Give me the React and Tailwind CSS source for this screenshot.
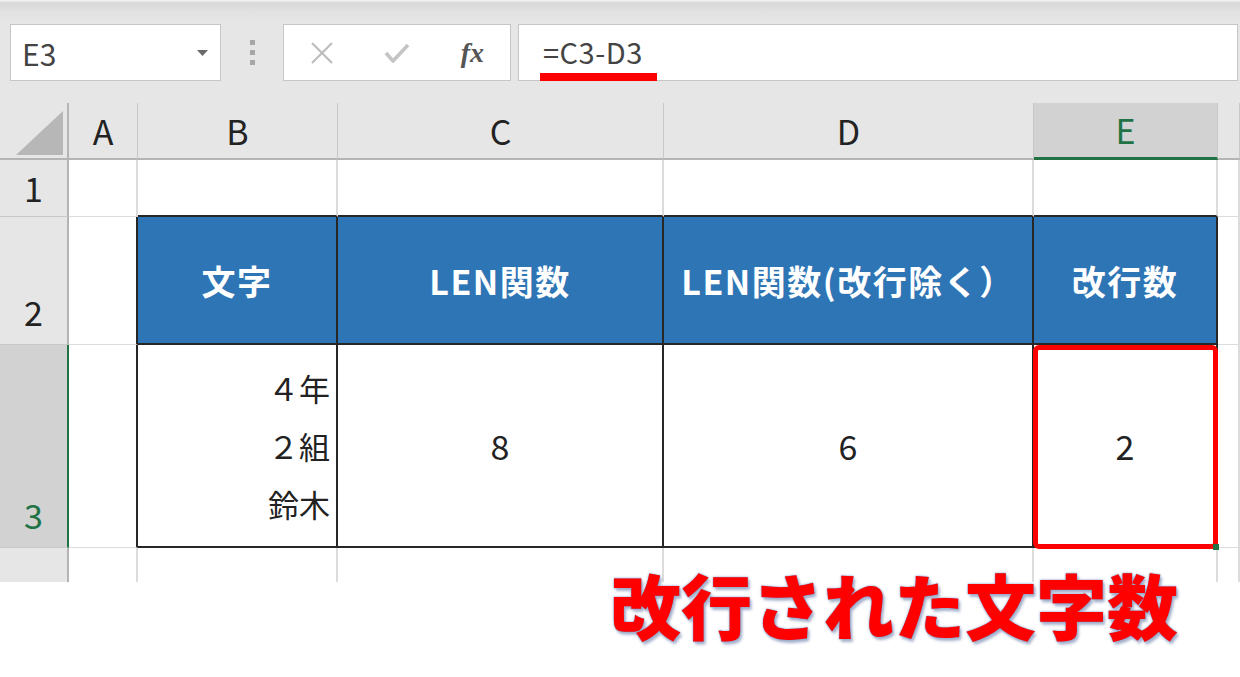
import React from "react";

const FONT = "font-['Noto_Sans_CJK_JP','Noto_Sans',sans-serif]";

function ColHead({ children, active }) {
  return (
    <div
      className={`flex items-center justify-center text-[34px] leading-none ${
        active
          ? "bg-[#d2d2d2] text-[#217346] border-b-[3px] border-b-[#217346]"
          : "bg-[#e6e6e6] text-[#222] border-b-2 border-b-[#b4b4b4]"
      } border-r border-r-[#c8c8c8]`}
    >
      {children}
    </div>
  );
}

function RowHead({ children, active, bottom }) {
  return (
    <div
      className={`flex justify-center text-[34px] leading-none border-b border-b-[#c8c8c8] ${
        bottom ? "items-end pb-[15px]" : "items-center"
      } ${
        active
          ? "bg-[#d2d2d2] text-[#217346] border-r-2 border-r-[#217346]"
          : "bg-[#e6e6e6] text-[#222] border-r-2 border-r-[#b4b4b4]"
      }`}
    >
      {children}
    </div>
  );
}

function Grid({ className = "" }) {
  return <div className={`bg-white border-r-2 border-r-[#dcdcdc] ${className}`} />;
}

function BlueCell({ children }) {
  return (
    <div className="flex items-center justify-center bg-[#2e75b6] border-r-2 border-r-[#262626] border-b-2 border-b-[#262626] text-white font-bold text-[34px] tracking-[1.5px] leading-none whitespace-nowrap pt-[2px]">
      {children}
    </div>
  );
}

function DataCell({ children, className = "" }) {
  return (
    <div
      className={`relative flex items-center justify-center bg-white border-r-2 border-r-[#262626] border-b-2 border-b-[#262626] text-[#222] text-[34px] leading-none ${className}`}
    >
      {children}
    </div>
  );
}

export default function App() {
  return (
    <div className={`relative w-[1240px] h-[677px] overflow-hidden bg-white ${FONT}`}>
      {/* Toolbar */}
      <div className="h-[103px] bg-[linear-gradient(#f6f6f6_0px,#d8d8d8_3px,#e2e2e2_12px,#e6e6e6_22px)] pt-[24px] pl-[10px] flex items-start">
        <div className="w-[211px] h-[57px] bg-white border border-[#c6c6c6] flex items-center justify-between pl-[11px] pr-[12px]">
          <span className="text-[30px] text-[#444] leading-none">E3</span>
          <svg width="11" height="6" viewBox="0 0 11 6">
            <path d="M0 0H11L5.5 6Z" fill="#6a6a6a" />
          </svg>
        </div>
        <div className="w-[62px] h-[57px] flex flex-col items-center justify-center gap-[5px]">
          <span className="block w-[5px] h-[5px] bg-[#a6a6a6]" />
          <span className="block w-[5px] h-[5px] bg-[#a6a6a6]" />
          <span className="block w-[5px] h-[5px] bg-[#a6a6a6]" />
        </div>
        <div className="w-[228px] h-[57px] bg-white border border-[#c6c6c6] flex items-center">
          <div className="w-[76px] flex justify-center">
            <svg width="24" height="24" viewBox="0 0 24 24">
              <path d="M2 2L22 22M22 2L2 22" stroke="#bdbdbd" strokeWidth="2.2" fill="none" />
            </svg>
          </div>
          <div className="w-[76px] flex justify-center">
            <svg width="26" height="22" viewBox="0 0 26 22">
              <path d="M2 11L9 19L24 3" stroke="#c4c4c4" strokeWidth="3.6" fill="none" strokeLinejoin="round" />
            </svg>
          </div>
          <div className="w-[76px] flex justify-center">
            <span className="font-['Liberation_Serif',serif] italic font-bold text-[28px] text-[#555] leading-none">
              fx
            </span>
          </div>
        </div>
        <div className="relative ml-[7px] w-[720px] h-[57px] bg-white border border-[#c6c6c6] flex items-center pl-[24px] pb-[2px]">
          <span className="text-[29px] text-[#444] leading-none tracking-[0.5px]">=C3-D3</span>
          <div className="absolute left-[21px] top-[48px] w-[117px] h-[8px] bg-[#ff0000]" />
        </div>
      </div>

      {/* Sheet */}
      <div className="grid grid-cols-[69px_69px_200px_326px_370px_184px_1fr] grid-rows-[57px_57px_128px_203px_34px]">
        {/* header row */}
        <div className="bg-[#e6e6e6] border-r-2 border-r-[#b4b4b4] border-b-2 border-b-[#b4b4b4] flex items-end justify-end pr-[4px] pb-[3px]">
          <svg width="47" height="44" viewBox="0 0 47 44">
            <path d="M47 0V44H0Z" fill="#b7b7b7" />
          </svg>
        </div>
        <ColHead>A</ColHead>
        <ColHead>B</ColHead>
        <ColHead>C</ColHead>
        <ColHead>D</ColHead>
        <ColHead active>E</ColHead>
        <ColHead></ColHead>

        {/* row 1 */}
        <RowHead>1</RowHead>
        <Grid className="border-b border-b-[#dcdcdc]" />
        <Grid className="border-b-2 border-b-[#262626]" />
        <Grid className="border-b-2 border-b-[#262626]" />
        <Grid className="border-b-2 border-b-[#262626]" />
        <Grid className="border-b-2 border-b-[#262626]" />
        <Grid className="border-b border-b-[#dcdcdc]" />

        {/* row 2 */}
        <RowHead bottom>2</RowHead>
        <div className="bg-white border-r-2 border-r-[#262626] border-b border-b-[#dcdcdc]" />
        <BlueCell>文字</BlueCell>
        <BlueCell>LEN関数</BlueCell>
        <BlueCell>LEN関数(改行除く）</BlueCell>
        <BlueCell>改行数</BlueCell>
        <Grid className="border-b border-b-[#dcdcdc]" />

        {/* row 3 */}
        <RowHead bottom active>3</RowHead>
        <div className="bg-white border-r-2 border-r-[#262626] border-b border-b-[#dcdcdc]" />
        <DataCell className="!justify-end pr-[6px]">
          <div className="flex flex-col items-end text-[31px] leading-[58px]">
            <span>４年</span>
            <span>２組</span>
            <span>鈴木</span>
          </div>
        </DataCell>
        <DataCell>8</DataCell>
        <DataCell>6</DataCell>
        <DataCell>
          2
          <div className="absolute left-[-1px] top-0 right-[-2px] bottom-[-3px] border-[5px] border-[#ff0000] rounded-[6px]" />
          <div className="absolute right-[-3px] bottom-[-4px] w-[6px] h-[6px] bg-[#217346]" />
        </DataCell>
        <Grid className="border-b border-b-[#dcdcdc]" />

        {/* row 4 */}
        <div className="bg-[#e6e6e6] border-r-2 border-r-[#b4b4b4]" />
        <Grid />
        <Grid />
        <Grid />
        <Grid />
        <Grid />
        <Grid />
      </div>

      {/* Annotation */}
      <div className="absolute left-[610px] top-[568px] text-[#ff0000] font-black text-[71px] leading-none whitespace-nowrap [text-shadow:0_0_1px_#6f84b8,0_0_3px_#9fb0d4,2px_3px_3px_#a6b2cc]">
        改行された文字数
      </div>
    </div>
  );
}
